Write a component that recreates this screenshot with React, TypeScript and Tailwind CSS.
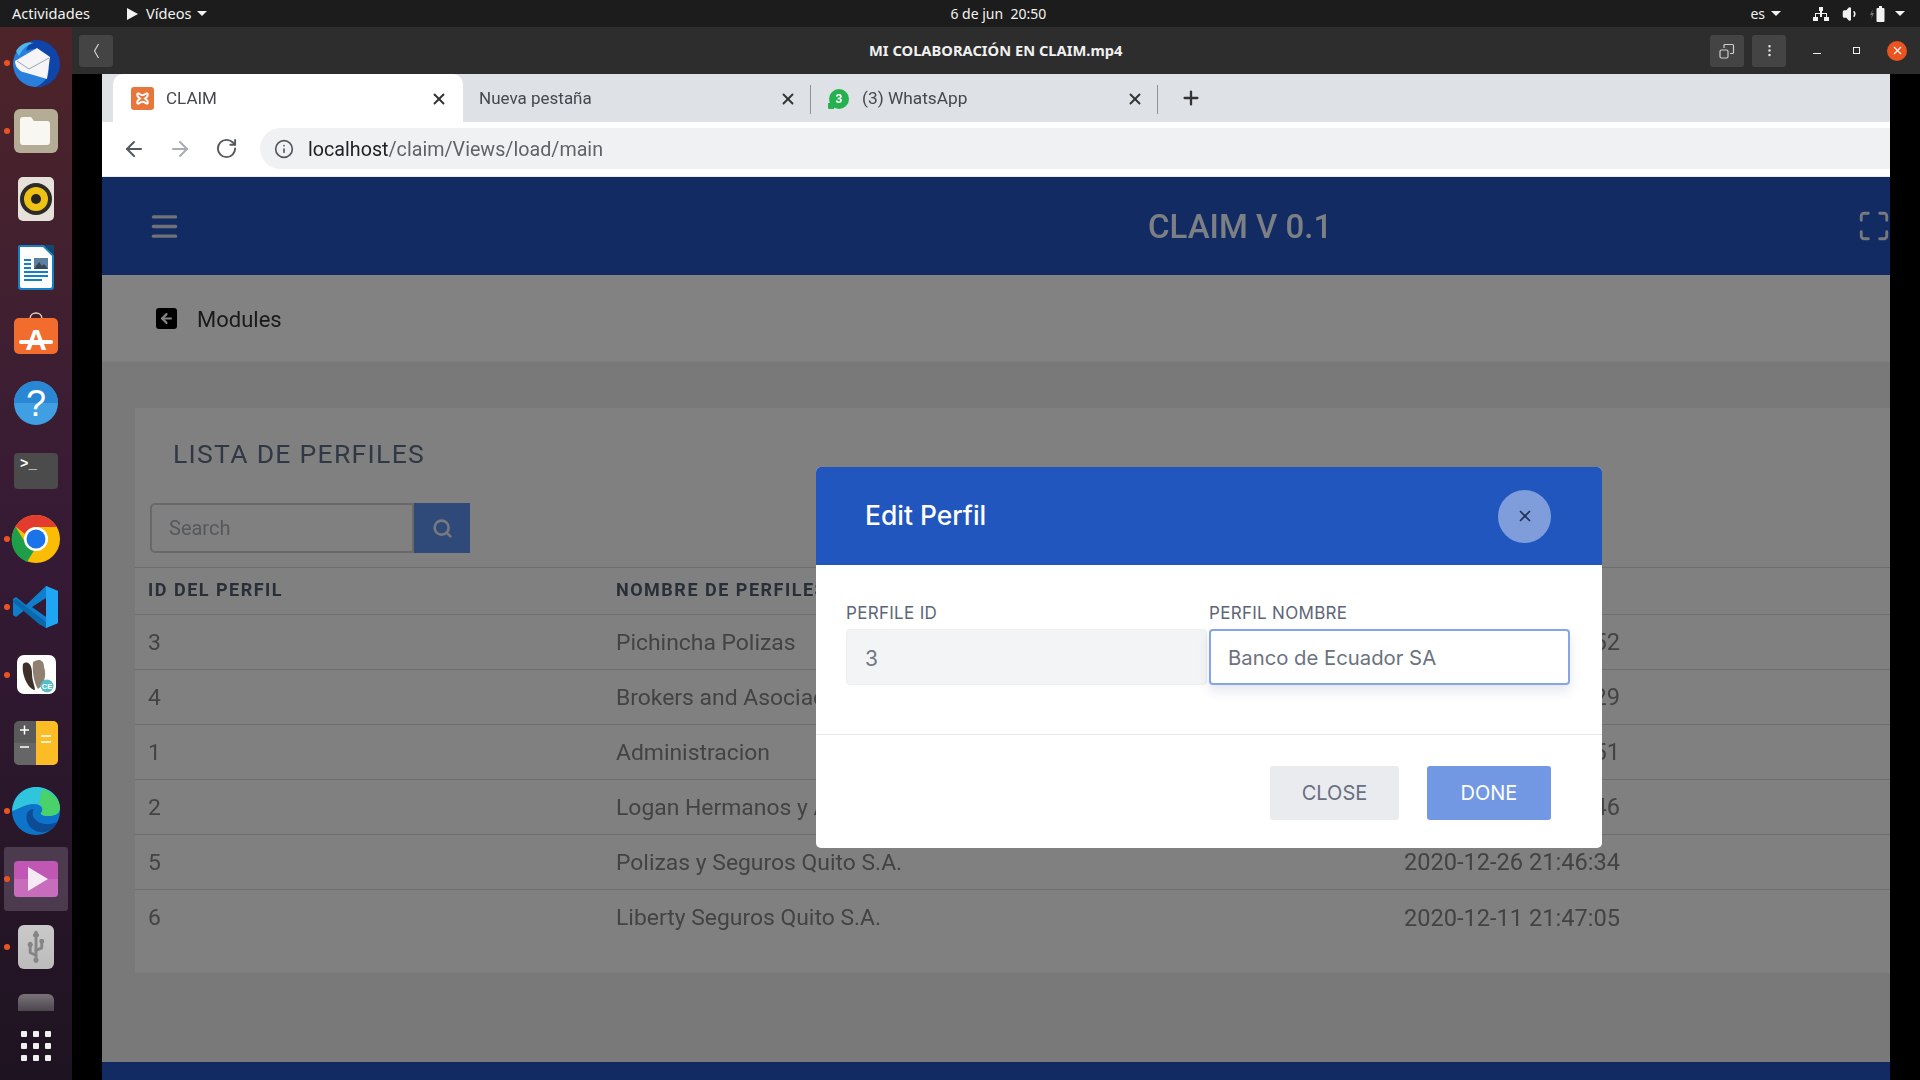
import React from "react";
import { Usb, ArrowLeft, ArrowRight, RotateCw, Info, Menu, Search, X, Plus, Maximize, Volume1, EllipsisVertical } from "lucide-react";

const rows = [
  { id: "3", name: "Pichincha Polizas", date: "2020-12-26 21:46:52" },
  { id: "4", name: "Brokers and Asociados", date: "2020-12-26 21:46:29" },
  { id: "1", name: "Administracion", date: "2020-12-26 21:46:51" },
  { id: "2", name: "Logan Hermanos y Asociados", date: "2020-12-26 21:46:46" },
  { id: "5", name: "Polizas y Seguros Quito S.A.", date: "2020-12-26 21:46:34" },
  { id: "6", name: "Liberty Seguros Quito S.A.", date: "2020-12-11 21:47:05" },
];

function DockItem({ running, active, children }: { running?: boolean; active?: boolean; children: React.ReactNode }) {
  return (
    <div className="relative h-[68px] w-[72px] flex items-center justify-center shrink-0">
      {active && <div className="absolute left-[4px] top-[2px] h-[64px] w-[64px] rounded-[3px] bg-[#4c3b4e]"></div>}
      {running && <div className="absolute left-[4px] top-[31px] h-[6px] w-[6px] rounded-full bg-[#e95420]"></div>}
      <svg width="56" height="56" viewBox="0 0 56 56" className="relative">
        {children}
      </svg>
    </div>
  );
}

function Dock() {
  return (
    <div className="w-[72px] shrink-0 flex flex-col pt-[2px] bg-linear-to-b from-[#4d2429] via-[#351a35] to-[#1e1320]">
      <DockItem running>
        <circle cx="28" cy="29" r="23" fill="#2a7fdc" />
        <path d="M26 5c14-1 26 10 26 24 0 13-10 23-24 23 9-4 14-12 13-21-1-10-8-17-15-17-3 0-6 1-8 2 2-6 4-9 8-11z" fill="#0f45a8" />
        <path d="M7 26l22-13 13 9-3 22-24-7c-5-2-8-6-8-11z" fill="#f5f5f7" />
        <path d="M9 26l12 8 20-11" fill="none" stroke="#9aa3b0" strokeWidth="1" />
        <path d="M8 16c4-7 11-10 18-8-6 1-12 6-15 13z" fill="#4db7ee" />
      </DockItem>
      <DockItem running>
        <rect x="6" y="6" width="44" height="44" rx="6" fill="#b5ac95" />
        <path d="M12 17a3 3 0 0 1 3-3h8l3 4h13a3 3 0 0 1 3 3v18a3 3 0 0 1-3 3H15a3 3 0 0 1-3-3z" fill="#f8f7f2" />
      </DockItem>
      <DockItem>
        <rect x="10" y="6" width="36" height="44" rx="5" fill="#e6e2d9" />
        <circle cx="28" cy="28" r="16" fill="#2d2b27" />
        <circle cx="28" cy="28" r="12" fill="#eec215" />
        <circle cx="28" cy="28" r="5" fill="#26241f" />
      </DockItem>
      <DockItem>
        <path d="M10 8a2 2 0 0 1 2-2h24l10 10v32a3 3 0 0 1-3 3H13a3 3 0 0 1-3-3z" fill="#1480c4" />
        <path d="M12 8h23l9 9v30a2 2 0 0 1-2 2H14a2 2 0 0 1-2-2z" fill="#ffffff" />
        <path d="M36 6l10 0v10z" fill="#13496e" />
        <path d="M16 21h7M16 25h7M16 29h7M16 33h24M16 37h24M16 41h18" stroke="#1480c4" strokeWidth="2" />
        <rect x="26" y="19" width="14" height="11" fill="#5d7f9f" />
        <path d="M26 30l5-7 3 4 2-2 4 5z" fill="#33475a" />
      </DockItem>
      <DockItem>
        <path d="M22 12c0-8 12-8 12 0" fill="none" stroke="#e8d3bd" strokeWidth="1.5" />
        <rect x="6" y="11" width="44" height="36" rx="5" fill="#f26c2e" />
        <text x="28" y="43" textAnchor="middle" fill="#ffffff" fontFamily="Liberation Sans, sans-serif" fontWeight="700" fontSize="30">
          A
        </text>
        <rect x="11" y="33" width="34" height="4" rx="2" fill="#ffffff" />
      </DockItem>
      <DockItem>
        <circle cx="28" cy="28" r="22" fill="#3f9fe2" />
        <path d="M6 28a22 22 0 0 1 44 0z" fill="#2a87d3" />
        <text x="28" y="41" textAnchor="middle" fill="#ffffff" fontFamily="Liberation Sans, sans-serif" fontWeight="400" fontSize="36">
          ?
        </text>
      </DockItem>
      <DockItem>
        <rect x="6" y="10" width="44" height="36" rx="4" fill="#4b4b4b" />
        <text x="12" y="25" fill="#ffffff" fontFamily="Liberation Mono, monospace" fontWeight="700" fontSize="14">
          &gt;_
        </text>
      </DockItem>
      <DockItem running>
        <circle cx="28" cy="28" r="24" fill="#fbbc04" />
        <path d="M28 4a24 24 0 0 1 21 12H28a12 12 0 0 0-11 7L7.5 15.5A24 24 0 0 1 28 4z" fill="#e33b2e" />
        <path d="M7.5 15.5L18 33a12 12 0 0 0 8 6.5L19 51A24 24 0 0 1 7.5 15.5z" fill="#1f9e4a" />
        <circle cx="28" cy="28" r="12" fill="#ffffff" />
        <circle cx="28" cy="28" r="9.5" fill="#1a73e8" />
      </DockItem>
      <DockItem running>
        <path d="M38 7l12 5v32l-12 5-20-19-10 8-3-2v-16l3-2 10 8z" fill="#0f7fcb" />
        <path d="M38 7l12 5v32l-12 5z" fill="#1fa5f4" />
        <path d="M38 19l-14 9 14 10z" fill="#351a35" />
        <path d="M8 20l-3 2 0 1 26 22 7 4v-6z" fill="#0a69ad" />
      </DockItem>
      <DockItem running>
        <rect x="9" y="8" width="39" height="39" rx="7" fill="#ffffff" />
        <path d="M15 17c5-4 9 1 9 9s3 13 3 17c-6 0-14-15-12-26z" fill="#3d3029" />
        <path d="M25 15c6-4 11-2 11 5 3 8 0 18-6 22-4-6-6-18-5-27z" fill="#8f8072" />
        <circle cx="39" cy="39" r="6.500" fill="#57bcc4" />
        <text x="39" y="42" textAnchor="middle" fill="#ffffff" fontFamily="Liberation Sans, sans-serif" fontWeight="700" fontSize="7.500">
          CE
        </text>
      </DockItem>
      <DockItem>
        <rect x="6" y="6" width="44" height="44" rx="5" fill="#5a5a5a" />
        <path d="M6 28h22v22H11a5 5 0 0 1-5-5z" fill="#666666" />
        <path d="M28 6h17a5 5 0 0 1 5 5v34a5 5 0 0 1-5 5H28z" fill="#fcbc25" />
        <path d="M12 15h9M16.500 10.500v9M12 32h9" stroke="#ffffff" strokeWidth="1.500" />
        <path d="M33 21h10M33 27h10" stroke="#ffffff" strokeWidth="1.500" />
      </DockItem>
      <DockItem running>
        <circle cx="28" cy="28" r="24" fill="#0e74c9" />
        <path d="M4 28C5 13 16 4 28 4c14 0 24 10 24 21 0 6-6 8-12 8-5 0-8-2-7-3 3-2 2-9-7-9-9 0-15 5-22 7z" fill="#30c5dd" />
        <path d="M34 6c10 3 18 10 18 19 0 6-6 8-12 8-5 0-8-2-7-3 3-3 1-8-2-9z" fill="#49d269" />
        <path d="M19 30c-3 10 6 21 18 19 6-1 11-6 12-10-6 3-15 3-20-1-4-3-6-8-3-12-3 0-6 2-7 4z" fill="#0b4c94" />
      </DockItem>
      <DockItem running active>
        <rect x="6" y="10" width="44" height="36" rx="4" fill="#c157b4" />
        <path d="M6 28h44v14a4 4 0 0 1-4 4H10a4 4 0 0 1-4-4z" fill="#c76dbb" />
        <path d="M20 16l20 12-20 12z" fill="#f6e9f4" />
      </DockItem>
      <div className="relative h-[68px] w-[72px] flex items-center justify-center shrink-0">
        <div className="absolute left-[4px] top-[31px] h-[6px] w-[6px] rounded-full bg-[#e95420]"></div>
        <div className="h-[44px] w-[36px] rounded-[6px] bg-linear-to-b from-[#c9c9c9] to-[#bcbcbc] flex items-center justify-center">
          <Usb size={28} color="#858585" strokeWidth={2.5} className="-rotate-45" />
        </div>
      </div>
      <div className="h-[31px] w-[72px] flex justify-center pt-[13px] shrink-0">
        <div className="h-[17px] w-[36px] rounded-t-[6px] bg-linear-to-b from-[#7a747a] to-[#4d454e]"></div>
      </div>
      <div className="grid grid-cols-3 gap-[6px] w-[30px] mx-auto mt-[19px] shrink-0">
        {Array.from({ length: 9 }).map((_, i) => (
          <div key={i} className="h-[6px] w-[6px] rounded-[1px] bg-[#f0f0f0]"></div>
        ))}
      </div>
    </div>
  );
}

function TopBar() {
  return (
    <div className="relative h-[27px] bg-[#1c1c1c] text-[#f2f2f2] flex items-center text-[14px] font-['Noto_Sans',sans-serif] shrink-0">
      <span className="ml-[12px] text-[14.6px]">Actividades</span>
      <svg width="11" height="12" viewBox="0 0 11 12" className="ml-[37px]">
        <path d="M0 0l11 6-11 6z" fill="#f2f2f2" />
      </svg>
      <span className="ml-[8px] text-[14.6px]">Vídeos</span>
      <div className="ml-[6px] h-0 w-0 border-x-[5px] border-t-[5px] border-x-transparent border-t-[#f2f2f2]"></div>
      <span className="ml-[743px] w-[94px] whitespace-nowrap">6 de jun&nbsp; 20:50</span>
      <span className="ml-auto">es</span>
      <div className="ml-[6px] h-0 w-0 border-x-[5px] border-t-[5px] border-x-transparent border-t-[#f2f2f2]"></div>
      <svg width="16" height="16" viewBox="0 0 16 16" className="ml-[32px]">
        <path d="M6 1h4v4H9v2h5v4h2v4h-5v-4h2V8H9v3h2v0H5v0h2V8H3v3h2v4H0v-4h2V7h5V5H6z" fill="#f2f2f2" />
      </svg>
      <Volume1 size={18} className="ml-[13px]" fill="#f2f2f2" />
      <svg width="16" height="18" viewBox="0 0 16 18" className="ml-[10px]">
        <path d="M3 4L0 10h2l-1 4 3-6H2z" fill="#777" />
        <rect x="6.500" y="3" width="8" height="14" rx="1" fill="#f2f2f2" />
        <rect x="9" y="1" width="3" height="2" fill="#f2f2f2" />
      </svg>
      <div className="ml-[9px] mr-[15px] h-0 w-0 border-x-[5px] border-t-[5px] border-x-transparent border-t-[#f2f2f2]"></div>
    </div>
  );
}

function TitleBar() {
  return (
    <div className="h-[47px] bg-[#2d2d2d] flex items-center shrink-0 text-[#f0f0f0] font-['Noto_Sans',sans-serif]">
      <div className="ml-[7px] h-[32px] w-[34px] rounded-[3px] bg-[#444444] flex items-center justify-center">
        <svg width="7" height="16" viewBox="0 0 7 16">
          <path d="M5.500 1L1.500 8l4 7" fill="none" stroke="#cfcfcf" strokeWidth="1.200" />
        </svg>
      </div>
      <span className="ml-[756px] text-[14.7px] font-bold whitespace-nowrap">MI COLABORACIÓN EN CLAIM.mp4</span>
      <div className="ml-auto h-[32px] w-[34px] rounded-[3px] bg-[#444444] flex items-center justify-center">
        <svg width="16" height="16" viewBox="0 0 16 16" fill="none" stroke="#cfcfcf" strokeWidth="1.200">
          <path d="M5 5V2.500a1 1 0 0 1 1-1h7.500a1 1 0 0 1 1 1v7a1 1 0 0 1-1 1H11" />
          <rect x="1" y="7" width="8" height="8" rx="1.500" />
        </svg>
      </div>
      <div className="ml-[8px] h-[32px] w-[34px] rounded-[3px] bg-[#444444] flex items-center justify-center">
        <EllipsisVertical size={15} color="#e5e5e5" />
      </div>
      <div className="ml-[27px] mt-[5px] h-px w-[8px] bg-[#f0f0f0]"></div>
      <div className="ml-[32px] h-[7px] w-[7px] border border-[#f0f0f0]"></div>
      <div className="ml-[27px] mr-[13px] h-[20px] w-[20px] rounded-full bg-[#e95420] flex items-center justify-center">
        <X size={13} color="#ffffff" strokeWidth={2} />
      </div>
    </div>
  );
}

function ChromeBar() {
  return (
    <div className="shrink-0 font-['Roboto',sans-serif]">
      <div className="h-[48px] bg-[#dee1e6] flex items-end text-[#45494f] text-[17px]">
        <div className="ml-[11px] h-[48px] w-[350px] bg-white rounded-t-[10px] flex items-center pl-[18px] pr-[15px] pt-[1px]">
          <svg width="23" height="23" viewBox="0 0 23 23">
            <rect width="23" height="23" rx="3" fill="#e8763a" />
            <path d="M7 6c4 3 5 3 9 0M7 17c4-3 5-3 9 0M7 6c-2 2 0 4 2 5.500-2 1.500-4 3.500-2 5.500M16 6c2 2 0 4-2 5.500 2 1.500 4 3.500 2 5.500" fill="none" stroke="#ffffff" strokeWidth="2" />
          </svg>
          <span className="ml-[12px]">CLAIM</span>
          <X size={18} strokeWidth={2.5} color="#333" className="ml-auto" />
        </div>
        <div className="h-[48px] w-[348px] flex items-center pl-[16px] pr-[14px] pt-[1px] relative">
          <span>Nueva pestaña</span>
          <X size={18} strokeWidth={2.5} color="#333" className="ml-auto" />
          <div className="absolute right-0 top-[11px] h-[29px] w-px bg-[#8f9297]"></div>
        </div>
        <div className="h-[48px] w-[347px] flex items-center pl-[18px] pr-[14px] pt-[1px] relative">
          <div className="relative h-[20px] w-[20px] rounded-full bg-[#25b24e] flex items-center justify-center text-white text-[12px] font-bold">
            3<div className="absolute -left-[1px] bottom-0 h-[6px] w-[6px] bg-[#25b24e] rounded-bl-[1px]"></div>
          </div>
          <span className="ml-[13px] text-[17.3px]">(3) WhatsApp</span>
          <X size={18} strokeWidth={2.5} color="#333" className="ml-auto" />
          <div className="absolute right-0 top-[11px] h-[29px] w-px bg-[#8f9297]"></div>
        </div>
        <Plus size={22} strokeWidth={2.5} color="#333" className="ml-[22px] mb-[13px]" />
      </div>
      <div className="h-[55px] bg-white flex items-start pt-[6px] border-b border-[#eceef1]">
        <ArrowLeft size={24} strokeWidth={2} color="#55595f" className="ml-[20px] mt-[9px]" />
        <ArrowRight size={24} strokeWidth={2} color="#a9adb3" className="ml-[22px] mt-[9px]" />
        <RotateCw size={23} strokeWidth={2} color="#55595f" className="ml-[23px] mt-[9px]" />
        <div className="ml-[22px] h-[41px] flex-1 rounded-l-full bg-[#f0f1f3] flex items-center pl-[14px]">
          <Info size={20} strokeWidth={2} color="#55595f" />
          <span className="ml-[14px] pt-[3px] text-[19.7px] text-[#5f6368] whitespace-nowrap">
            <span className="text-[#202124]">localhost</span>/claim/Views/load/main
          </span>
        </div>
      </div>
    </div>
  );
}

function ClaimPage() {
  return (
    <div className="relative flex-1 flex flex-col bg-[#e9e9e9] font-['Roboto',sans-serif] min-h-0">
      <div className="h-[98px] bg-[#2455bf] flex items-center shrink-0 text-[#eef4fb]">
        <Menu size={33} strokeWidth={2.5} className="ml-[46px]" color="#d6dbe6" />
        <span className="ml-[967px] pt-[1px] text-[33px] font-medium whitespace-nowrap">CLAIM V 0.1</span>
        <Maximize size={34} strokeWidth={2} className="ml-auto -mr-[1px]" color="#e4e8f0" />
      </div>
      <div className="h-[87px] bg-[#fafafa] flex items-center pl-[54px] shrink-0 border-b border-[#f1f1f1]">
        <div className="h-[21px] w-[21px] rounded-[3px] bg-black flex items-center justify-center">
          <ArrowLeft size={15} color="#ffffff" strokeWidth={3.5} />
        </div>
        <span className="ml-[20px] pt-[2px] text-[22px] text-[#333333]">Modules</span>
      </div>
      <div className="ml-[33px] mt-[46px] h-[565px] bg-[#f5f5f5] shrink-0">
        <div className="h-[95px] pl-[38px] pt-[26px] text-[26.5px] tracking-[1.3px] text-[#5f6c84]">LISTA DE PERFILES</div>
        <div className="ml-[15px] flex h-[50px] w-[320px]">
          <div className="w-[264px] border-2 border-[#cacaca] rounded-l-[5px] flex items-center pl-[17px] text-[20px] text-[#a4aab2]">Search</div>
          <div className="w-[56px] bg-[#5b8fe8] flex items-center justify-center">
            <Search size={21} strokeWidth={3} color="#e2e8f2" />
          </div>
        </div>
        <div className="mt-[14px] h-[48px] pb-[3px] grid grid-cols-[468px_788px_1fr] items-center pl-[13px] border-y border-[#d4d4d4] text-[18px] font-bold tracking-[1.5px] text-[#4f5b6b] whitespace-nowrap">
          <span>ID DEL PERFIL</span>
          <span>NOMBRE DE PERFILES</span>
          <span>FECHA</span>
        </div>
        {rows.map((row, i) => (
          <div key={row.id} className={"h-[55px] pt-[2px] grid grid-cols-[468px_788px_1fr] items-center pl-[13px] text-[22.9px] text-[#808080] whitespace-nowrap " + (i < 5 ? "border-b border-[#d4d4d4]" : "")}>
            <span>{row.id}</span>
            <span>{row.name}</span>
            <span className="text-[23.6px]">{row.date}</span>
          </div>
        ))}
      </div>
      <div className="mt-auto h-[18px] bg-[#2455bf] shrink-0"></div>
      <div className="absolute inset-0 bg-black/[0.48]"></div>
    </div>
  );
}

function Modal() {
  return (
    <div className="absolute left-[816px] top-[467px] w-[786px] h-[381px] rounded-[5px] bg-white overflow-hidden font-['Inter',sans-serif]">
      <div className="h-[98px] bg-[#2056be] flex items-center justify-between pl-[49px] pr-[51px]">
        <span className="text-[26.4px] font-medium text-white">Edit Perfil</span>
        <div className="h-[53px] w-[53px] rounded-full bg-[#7f9ddb] flex items-center justify-center">
          <X size={18} strokeWidth={2.2} color="#1e3050" />
        </div>
      </div>
      <div className="h-[170px] pt-[40px] pl-[30px] pr-[32px] border-b border-[#e5e7eb]">
        <div className="grid grid-cols-2 gap-[2px] text-[17px] tracking-[0.3px] text-[#5d6678] h-[24px] leading-[16px]">
          <span>PERFILE ID</span>
          <span>PERFIL NOMBRE</span>
        </div>
        <div className="grid grid-cols-2 gap-[2px]">
          <div className="h-[56px] rounded-[4px] bg-[#f3f4f5] border border-[#eceef0] flex items-center pl-[18px] pt-[3px] text-[21px] text-[#717884]">3</div>
          <div className="h-[56px] rounded-[4px] bg-white border-2 border-[#86a4e8] shadow-[0_6px_12px_rgba(30,60,120,0.12)] flex items-center pl-[17px] pt-[3px] text-[20.3px] text-[#6b7280]">Banco de Ecuador SA</div>
        </div>
      </div>
      <div className="flex justify-end gap-[28px] pt-[31px] pr-[51px]">
        <div className="h-[54px] w-[129px] rounded-[3px] bg-[#e9ebef] flex items-center justify-center text-[20px] text-[#687080]">CLOSE</div>
        <div className="h-[54px] w-[124px] rounded-[3px] bg-[#7298e4] flex items-center justify-center text-[20px] text-white">DONE</div>
      </div>
    </div>
  );
}

export default function App() {
  return (
    <div className="relative h-[1080px] w-[1920px] overflow-hidden flex flex-col bg-black">
      <TopBar />
      <div className="flex flex-1 min-h-0">
        <Dock />
        <div className="flex-1 flex flex-col min-w-0">
          <TitleBar />
          <div className="flex-1 flex min-h-0 bg-black pl-[30px] pr-[30px]">
            <div className="flex-1 flex flex-col min-w-0 blur-[0.4px] overflow-hidden">
              <ChromeBar />
              <ClaimPage />
            </div>
          </div>
        </div>
      </div>
      <Modal />
    </div>
  );
}
